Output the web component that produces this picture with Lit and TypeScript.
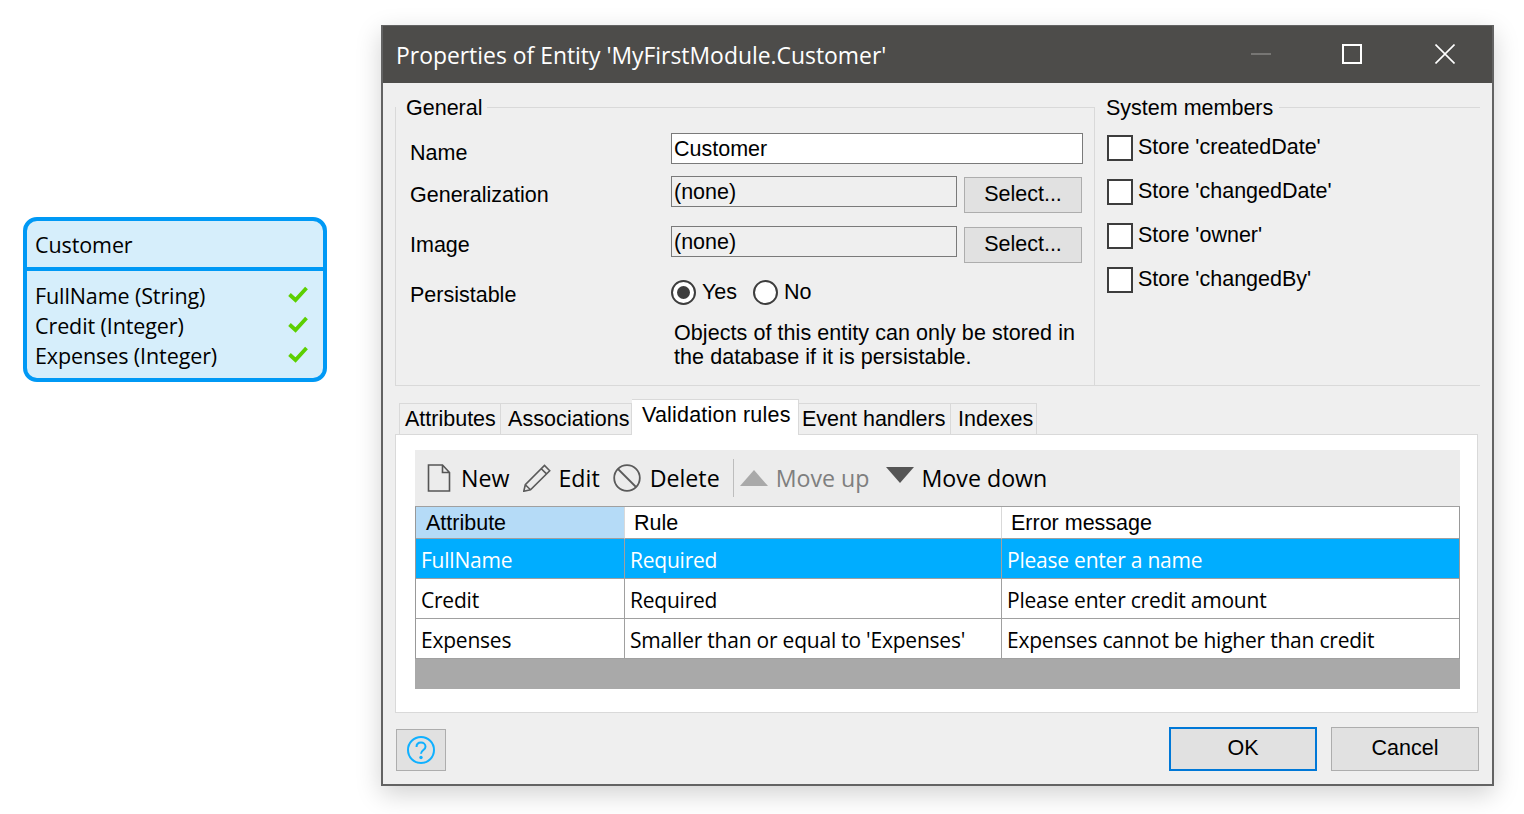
import { LitElement, html, css, svg } from "lit";
import { customElement } from "lit/decorators.js";

const rows = [
  ["FullName", "Required", "Please enter a name"],
  ["Credit", "Required", "Please enter credit amount"],
  ["Expenses", "Smaller than or equal to 'Expenses'", "Expenses cannot be higher than credit"],
];

const attributes = ["FullName (String)", "Credit (Integer)", "Expenses (Integer)"];
const members = ["createdDate", "changedDate", "owner", "changedBy"];

const check = svg`<path d="M1.500 9.500l6 5.500L18.500 3" fill="none" stroke="#5ccf00" stroke-width="3.800"/>`;

@customElement("app-root")
export class AppRoot extends LitElement {
  static styles = css`
    :host {
      display: flex;
      width: 1524px;
      height: 814px;
      background: #fff;
      overflow: hidden;
      font-family: "Liberation Sans", Arial, sans-serif;
      font-size: 21.5px;
      color: #000;
    }
    /* entity card on the left */
    .entity {
      box-sizing: border-box;
      width: 304px;
      height: 165px;
      margin: 217px 0 0 23px;
      border: 4px solid #0099f5;
      border-radius: 14px;
      background: #d6eefb;
      font-family: "Open Sans", sans-serif;
      font-size: 21.500px;
      letter-spacing: -0.100px;
    }
    .entity-head {
      height: 46px;
      line-height: 48px;
      padding-left: 8px;
      border-bottom: 4px solid #0099f5;
    }
    .entity-body { padding: 9px 8px 0; }
    .entity-row {
      display: flex;
      justify-content: space-between;
      align-items: center;
      height: 30px;
      padding-right: 7px;
    }
    .entity-row svg { width: 20px; height: 20px; }

    /* dialog */
    .dialog {
      box-sizing: border-box;
      width: 1113px;
      height: 761px;
      margin: 25px 0 0 54px;
      border: 2px solid #636363;
      border-top-width: 1px;
      background: #efefef;
      box-shadow: 0 8px 24px rgba(0, 0, 0, 0.18);
    }
    .titlebar {
      display: flex;
      align-items: center;
      height: 57px;
      padding-left: 13px;
      background: #4d4c4a;
      color: #fff;
      font-family: "Open Sans", sans-serif;
      font-size: 22.900px;
    }
    .title { flex: 1; padding-top: 2px; }
    .win-btn { display: block; width: 20px; height: 20px; margin-bottom: 2px; }
    .win-min { margin-right: 71px; }
    .win-max { margin-right: 73px; }
    .win-close { margin-right: 37px; }

    .top {
      display: flex;
      margin: 12px 12px 0 12px;
      height: 291px;
    }
    fieldset {
      box-sizing: border-box;
      margin: 0;
      padding: 0;
      min-width: 0;
      border: 1px solid #d9d9d9;
    }
    legend { padding: 0 4px 0 10px; margin-left: 0; line-height: 26px; height: 24px; }
    .general { width: 700px; border-right-width: 1px; }
    .system { flex: 1; border-left: 0; border-right: 0; }
    .system legend { padding: 0 6px 0 11px; }

    .form {
      display: grid;
      grid-template-columns: 261px 286px 119px;
      margin-top: 14px;
      padding-left: 14px;
    }
    .label { align-self: center; }
    .label.name { padding-bottom: 2px; }
    .label.low { padding-top: 2px; }
    .label.persist { align-self: start; padding-top: 7px; }
    .input {
      box-sizing: border-box;
      height: 31px;
      line-height: 30px;
      padding-left: 2px;
      border: 1px solid #7a7a7a;
    }
    .input.edit { grid-column: 2 / 4; width: 412px; background: #fff; margin-bottom: 12px; }
    .btn {
      box-sizing: border-box;
      border: 1px solid #adadad;
      background: #e1e1e1;
      text-align: center;
    }
    .select { width: 118px; height: 36px; line-height: 32px; margin: 1px 0 0 7px; }
    .gen-row { margin-bottom: 13px; }
    .radios {
      grid-column: 2 / 4;
      display: flex;
      align-items: center;
      height: 27px;
      margin-top: 3px;
      gap: 6px;
    }
    .radio {
      box-sizing: border-box;
      width: 25px;
      height: 25px;
      border: 2px solid #3d3d3d;
      border-radius: 50%;
      background: #fff;
      padding: 4px;
    }
    .radio.on::before {
      content: "";
      display: block;
      width: 13px;
      height: 13px;
      border-radius: 50%;
      background: #3d3d3d;
    }
    .radio-no { margin-left: 10px; }
    .note {
      grid-column: 2 / 4;
      margin-top: 13px;
      padding-left: 3px;
      line-height: 24px;
      letter-spacing: 0.070px;
      white-space: nowrap;
    }

    .members { display: flex; flex-direction: column; gap: 18px; padding: 16px 0 0 12px; }
    .member { display: flex; align-items: center; gap: 5px; height: 26px; }
    .box {
      box-sizing: border-box;
      width: 26px;
      height: 26px;
      border: 2px solid #3d3d3d;
      background: #fff;
    }
    .member span { padding-bottom: 2px; }

    /* tabs */
    .tabs {
      display: flex;
      align-items: flex-end;
      height: 35px;
      margin: 13px 0 0 16px;
    }
    .tab {
      box-sizing: border-box;
      height: 31px;
      line-height: 31px;
      border: 1px solid #d9d9d9;
      border-left-width: 0;
      border-bottom: 0;
      white-space: nowrap;
    }
    .tab:nth-child(1) { width: 102px; padding-left: 5px; border-left-width: 1px; }
    .tab:nth-child(2) { width: 131px; padding-left: 7px; letter-spacing: 0.080px; }
    .tab:nth-child(3) { width: 167px; padding-left: 10px; }
    .tab:nth-child(4) { width: 152px; padding-left: 3px; }
    .tab:nth-child(5) { width: 86px; padding-left: 7px; }
    .tab.active {
      position: relative;
      top: 1px;
      height: 36px;
      line-height: 30px;
      letter-spacing: 0.200px;
      background: #fff;
    }
    .pane {
      box-sizing: border-box;
      height: 279px;
      margin: 0 14px 0 12px;
      padding: 15px 17px 23px 19px;
      background: #fff;
      border: 1px solid #d9d9d9;
    }

    .toolbar {
      display: flex;
      align-items: center;
      height: 56px;
      background: #ececec;
      font-family: "Open Sans", sans-serif;
      font-size: 23.200px;
    }
    .tool { display: flex; align-items: center; }
    .tool svg { display: block; }
    .tool.off { color: #7f7f7f; }
    .tool-new { margin-left: 12px; }
    .tool-new svg { margin-right: 10px; }
    .tool-edit { margin-left: 14px; }
    .tool-edit svg { margin-right: 7px; }
    .tool-delete { margin-left: 13px; }
    .tool-delete svg { margin-right: 9px; }
    .tool-up svg { margin-right: 8px; }
    .tool-down { margin-left: 16px; }
    .tool-down svg { margin: -6px 8px 0 0; }
    .sep { width: 1px; height: 38px; background: #bdbdbd; margin: 0 6px 0 13px; }

    .grid {
      display: grid;
      grid-template-columns: 208px 377px 458px;
      border-left: 1px solid #999;
      border-right: 1px solid #999;
      border-top: 1px solid #a0a0a0;
      font-family: "Open Sans", sans-serif;
      font-size: 21px;
      letter-spacing: -0.220px;
    }
    .th {
      box-sizing: border-box;
      height: 32px;
      line-height: 33px;
      padding-left: 9px;
      border-bottom: 1px solid #a0a0a0;
      font-family: "Liberation Sans", Arial, sans-serif;
      font-size: 21.5px;
      letter-spacing: 0;
    }
    .th + .th { border-left: 1px solid #d9d9d9; }
    .th.sorted { background: #b5dbf7; padding-left: 10px; }
    .td {
      box-sizing: border-box;
      height: 40px;
      line-height: 43px;
      padding-left: 5px;
      border-bottom: 1px solid #a0a0a0;
      white-space: nowrap;
    }
    .td.mid, .td.last { border-left: 1px solid #a0a0a0; }
    .td.sel { background: #00adff; color: #fff; }
    .filler { height: 30px; background: #a9a9a9; }

    .footer {
      display: flex;
      margin: 14px 13px 0 13px;
      height: 44px;
    }
    .help {
      box-sizing: border-box;
      width: 50px;
      height: 42px;
      margin-top: 2px;
      display: flex;
      align-items: center;
      justify-content: center;
    }
    .spacer { flex: 1; }
    .action { width: 148px; height: 44px; line-height: 41px; }
    .action + .action { margin-left: 14px; }
    .ok { border: 2px solid #0078d7; line-height: 39px; }
  `;

  render() {
    return html`
      <div class="entity">
        <div class="entity-head">Customer</div>
        <div class="entity-body">
          ${attributes.map(
            (a) => html`<div class="entity-row">
              <span>${a}</span><svg viewBox="0 0 20 20">${check}</svg>
            </div>`
          )}
        </div>
      </div>

      <div class="dialog">
        <div class="titlebar">
          <span class="title">Properties of Entity 'MyFirstModule.Customer'</span>
          <svg class="win-btn win-min" viewBox="0 0 20 20"><path d="M0 10h20" stroke="#8a8987" stroke-width="1.4"/></svg>
          <svg class="win-btn win-max" viewBox="0 0 20 20"><rect x="1" y="1" width="18" height="18" fill="none" stroke="#fff" stroke-width="2"/></svg>
          <svg class="win-btn win-close" viewBox="0 0 20 20"><path d="M0.5 0.5l19 19M19.5 0.5l-19 19" stroke="#fff" stroke-width="1.6"/></svg>
        </div>

        <div class="top">
          <fieldset class="general">
            <legend>General</legend>
            <div class="form">
              <span class="label name">Name</span>
              <div class="input edit">Customer</div>
              <span class="label low gen-row">Generalization</span>
              <div class="input">(none)</div>
              <div class="btn select gen-row">Select...</div>
              <span class="label low gen-row">Image</span>
              <div class="input">(none)</div>
              <div class="btn select gen-row">Select...</div>
              <span class="label persist">Persistable</span>
              <div class="radios">
                <div class="radio on"></div><span>Yes</span>
                <div class="radio radio-no"></div><span>No</span>
              </div>
              <span></span>
              <div class="note">Objects of this entity can only be stored in<br />the database if it is persistable.</div>
            </div>
          </fieldset>
          <fieldset class="system">
            <legend>System members</legend>
            <div class="members">
              ${members.map(
                (m) => html`<div class="member"><div class="box"></div><span>Store '${m}'</span></div>`
              )}
            </div>
          </fieldset>
        </div>

        <div class="tabs">
          <div class="tab">Attributes</div>
          <div class="tab">Associations</div>
          <div class="tab active">Validation rules</div>
          <div class="tab">Event handlers</div>
          <div class="tab">Indexes</div>
        </div>
        <div class="pane">
          <div class="toolbar">
            <div class="tool tool-new">
              <svg width="24" height="28" viewBox="0 0 24 28">
                <path d="M1.500 1h14l7 7.500v18.500h-21zM15.500 1v7.500h7" fill="none" stroke="#555" stroke-width="1.600"/>
              </svg>New
            </div>
            <div class="tool tool-edit">
              <svg width="28" height="28" viewBox="0 0 28 28">
                <path d="M0.800 27.200l1.500-6.500L21.500 1.500l5.200 5.200L7.500 25.800zM2.300 20.700l5.200 5.100M18.300 4.700l5.200 5.200" fill="none" stroke="#5a5a5a" stroke-width="1.600"/>
              </svg>Edit
            </div>
            <div class="tool tool-delete">
              <svg width="28" height="28" viewBox="0 0 28 28">
                <circle cx="14" cy="14" r="12.800" fill="none" stroke="#5a5a5a" stroke-width="1.800"/>
                <path d="M5 5l18 18" stroke="#5a5a5a" stroke-width="1.800"/>
              </svg>Delete
            </div>
            <div class="sep"></div>
            <div class="tool tool-up off">
              <svg width="28" height="16" viewBox="0 0 28 16"><path d="M14 0l14 16H0z" fill="#a9a9a9"/></svg>Move up
            </div>
            <div class="tool tool-down">
              <svg width="28" height="16" viewBox="0 0 28 16"><path d="M0 0h28L14 16z" fill="#555"/></svg>Move down
            </div>
          </div>
          <div class="grid">
            <div class="th sorted">Attribute</div>
            <div class="th">Rule</div>
            <div class="th">Error message</div>
            ${rows.map((r, i) =>
              r.map(
                (c, j) => html`<div class="td ${i === 0 ? "sel" : ""} ${j === 1 ? "mid" : ""} ${j === 2 ? "last" : ""}">${c}</div>`
              )
            )}
          </div>
          <div class="filler"></div>
        </div>

        <div class="footer">
          <div class="btn help">
            <svg width="28" height="28" viewBox="0 0 28 28">
              <circle cx="14" cy="14" r="13" fill="none" stroke="#0fb0ff" stroke-width="2"/>
              <path d="M9.500 11c0-3 2-4.500 4.500-4.500s4.500 1.700 4.500 4.200c0 3.300-4.500 3.300-4.500 7" fill="none" stroke="#0fb0ff" stroke-width="2"/>
              <circle cx="14" cy="21.500" r="1.700" fill="#0fb0ff"/>
            </svg>
          </div>
          <div class="spacer"></div>
          <div class="btn action ok">OK</div>
          <div class="btn action">Cancel</div>
        </div>
      </div>
    `;
  }
}
